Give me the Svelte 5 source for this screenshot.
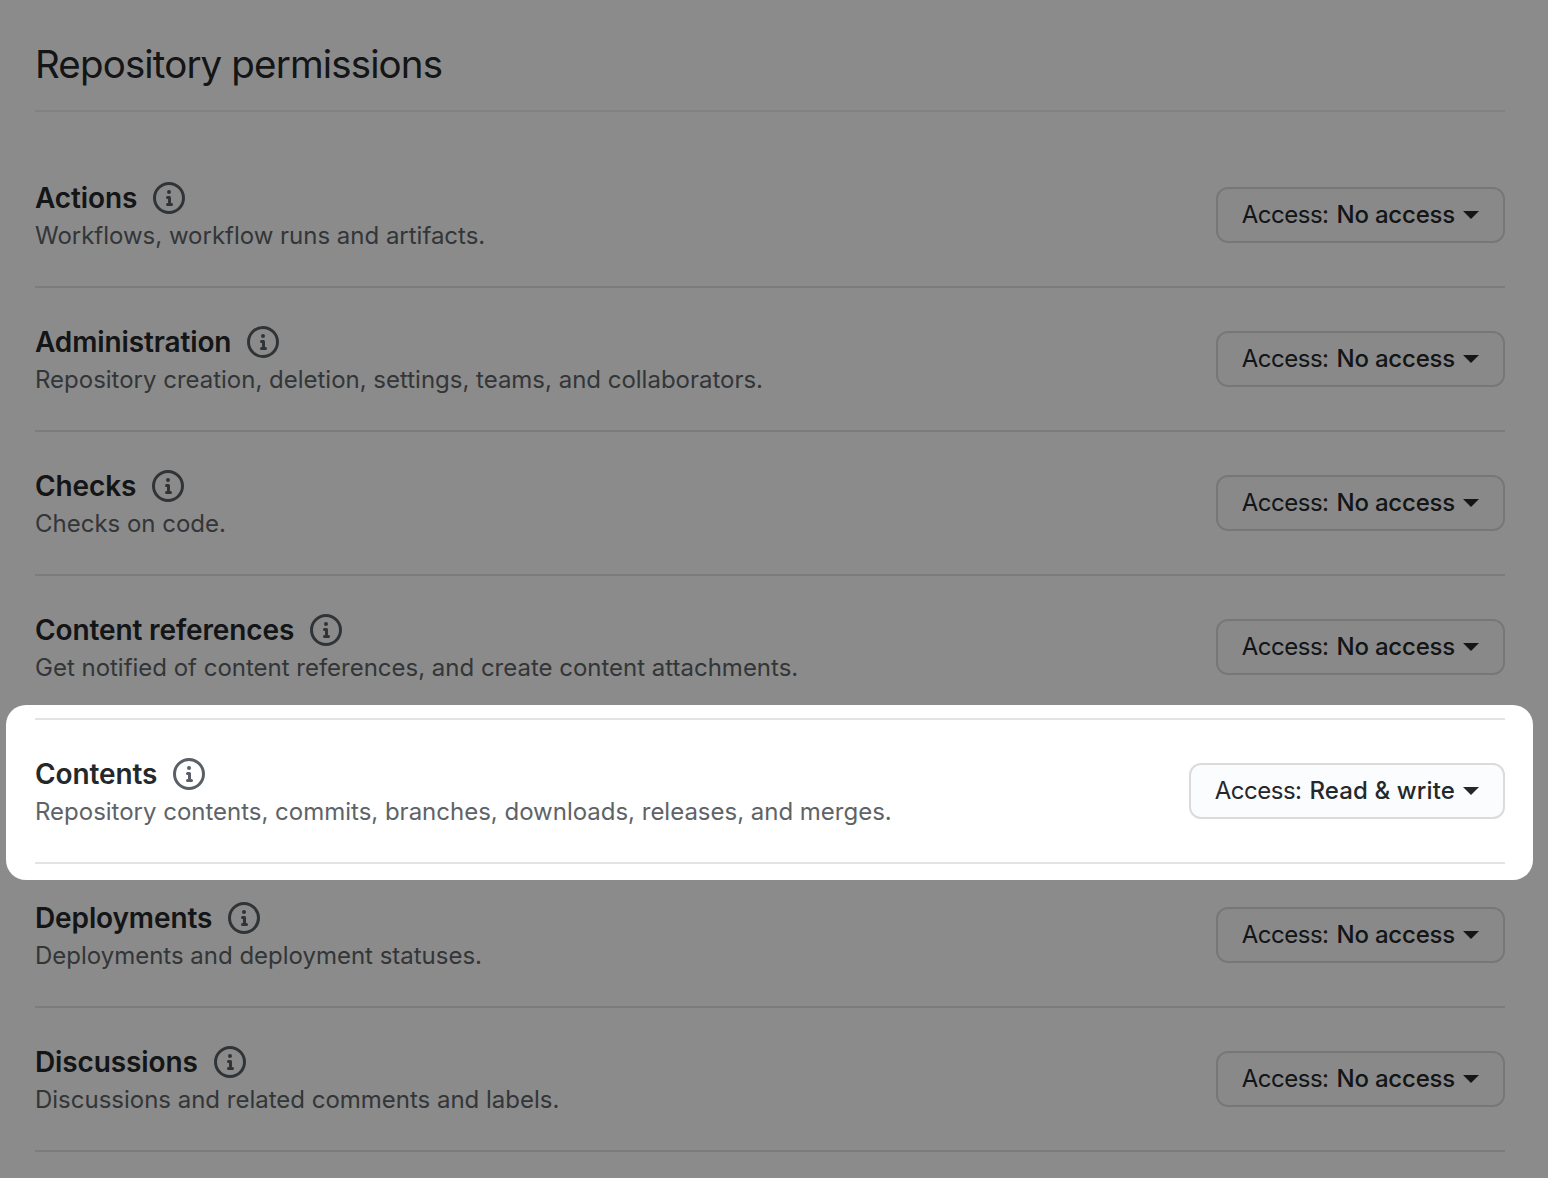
<script>
  const permissions = [
    {
      name: "Actions",
      description: "Workflows, workflow runs and artifacts.",
      access: "No access",
    },
    {
      name: "Administration",
      description:
        "Repository creation, deletion, settings, teams, and collaborators.",
      access: "No access",
    },
    {
      name: "Checks",
      description: "Checks on code.",
      access: "No access",
    },
    {
      name: "Content references",
      description:
        "Get notified of content references, and create content attachments.",
      access: "No access",
    },
    {
      name: "Contents",
      description:
        "Repository contents, commits, branches, downloads, releases, and merges.",
      access: "Read & write",
      highlighted: true,
    },
    {
      name: "Deployments",
      description: "Deployments and deployment statuses.",
      access: "No access",
    },
    {
      name: "Discussions",
      description: "Discussions and related comments and labels.",
      access: "No access",
    },
  ];
</script>

<main>
  <h2>Repository permissions</h2>
  <ul>
    {#each permissions as permission}
      <li>
        <div class="info">
          <div class="title">
            <strong>{permission.name}</strong>
            <svg viewBox="0 0 16 16" width="32" height="32" aria-hidden="true">
              <path
                fill-rule="evenodd"
                d="M8 1.5a6.5 6.5 0 100 13 6.5 6.5 0 000-13zM0 8a8 8 0 1116 0A8 8 0 010 8zm6.5-.25A.75.75 0 017.25 7h1a.75.75 0 01.75.75v2.75h.25a.75.75 0 010 1.5h-2a.75.75 0 010-1.5h.25v-2h-.25a.75.75 0 01-.75-.75zM8 6a1 1 0 100-2 1 1 0 000 2z"
              />
            </svg>
          </div>
          <p>{permission.description}</p>
        </div>
        <button type="button" class:wide={permission.highlighted}>
          <span>Access:</span>
          <b>{permission.access}</b>
          <i class="caret"></i>
        </button>
        {#if permission.highlighted}
          <div class="spotlight"></div>
        {/if}
      </li>
    {/each}
  </ul>
</main>

<style>
  :global(body) {
    background-color: #fff;
    overflow: hidden;
  }
  main {
    box-sizing: border-box;
    height: 1178px;
    padding: 35px 43px 0 35px;
    overflow: hidden;
    position: relative;
    font-family: Inter, "Liberation Sans", sans-serif;
    color: #25282b;
  }
  h2 {
    margin: 0 0 32px;
    height: 75px;
    border-bottom: 2px solid #eaecee;
    font-size: 38.5px;
    font-weight: 400;
    line-height: 58px;
    letter-spacing: -0.86px;
  }
  ul {
    margin: 0;
    padding: 0;
    list-style: none;
  }
  li {
    position: relative;
    box-sizing: border-box;
    height: 144px;
    padding-top: 34px;
    display: flex;
    align-items: flex-start;
    justify-content: space-between;
    border-bottom: 2px solid #e2e3e5;
  }
  .title {
    display: flex;
    align-items: center;
    gap: 16px;
    height: 40px;
  }
  .title strong {
    font-size: 28px;
    font-weight: 600;
    letter-spacing: -0.12px;
  }
  .title svg {
    fill: #5a6066;
  }
  p {
    margin: 0;
    font-size: 24px;
    line-height: 36px;
    letter-spacing: -0.01px;
    color: #5e6367;
  }
  button {
    box-sizing: border-box;
    height: 56px;
    margin-top: 9px;
    padding: 0 24px 1px;
    display: flex;
    align-items: center;
    border: 2px solid #dadbdc;
    border-radius: 12px;
    background-color: #fbfcfd;
    font-family: inherit;
    font-size: 24px;
    color: #25282b;
  }
  button span {
    letter-spacing: -0.5px;
  }
  button b {
    margin-left: 8px;
    font-weight: 500;
    letter-spacing: -0.2px;
  }
  .wide b {
    letter-spacing: 0.12px;
  }
  .caret {
    margin-left: 8px;
    border: 8px solid transparent;
    border-top-color: #25282b;
    border-bottom-width: 0;
  }
  /* dims everything around the highlighted row */
  .spotlight {
    position: absolute;
    z-index: 1;
    top: -15px;
    right: -28px;
    bottom: -18px;
    left: -29px;
    border-radius: 20px;
    box-shadow: 0 0 0 2000px rgba(0, 0, 0, 0.455);
    pointer-events: none;
  }
</style>
